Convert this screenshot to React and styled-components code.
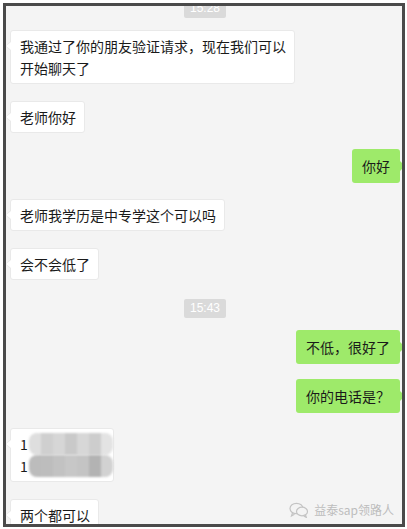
import React from 'react';
import styled, { createGlobalStyle } from 'styled-components';

const GlobalStyle = createGlobalStyle`
body{
    margin:0;
    background:#fff;
    font-family:"Noto Sans CJK SC","Liberation Sans",sans-serif;
}
`;

const Frame = styled.div`
position:relative;
box-sizing:border-box;
width:402px;
height:524px;
margin:3px 0 0 3px;
border:3px solid #4a4a4a;
background:#f4f4f4;
overflow:hidden;
display:flex;
flex-direction:column;
padding:0 2px 0 4px;
`;

const Time = styled.div`
align-self:center;
height:19px;
line-height:19px;
padding:0 6px;
margin-top:${p => p.$top}px;
background:#dadada;
border-radius:2px;
color:#fff;
font-family:"Liberation Sans",Arial,sans-serif;
font-size:12px;
`;

const Row = styled.div`
display:flex;
justify-content:${p => (p.$mine ? 'flex-end' : 'flex-start')};
margin-top:${p => p.$top}px;
flex-shrink:0;
`;

const Bubble = styled.div`
position:relative;
max-width:266px;
padding:${p => (p.$mine ? '6px 10px' : '4px 8px 4px 9px')};
border:${p => (p.$mine ? 'none' : '1px solid #e9e9e9')};
border-radius:3px;
background:${p => (p.$mine ? '#9eea6a' : '#fff')};
color:#1a1a1a;
font-size:14px;
line-height:22px;
&::before{
    content:'';
    position:absolute;
    top:${p => (p.$mine ? '12px' : '10px')};
    ${p => (p.$mine ? 'right:-5px;' : 'left:-6px;')}
    border-top:5px solid transparent;
    border-bottom:5px solid transparent;
    ${p => (p.$mine ? 'border-left:5px solid #9eea6a;' : 'border-right:6px solid #e9e9e9;')}
}
&::after{
    content:'';
    position:absolute;
    top:11px;
    left:-5px;
    display:${p => (p.$mine ? 'none' : 'block')};
    border-top:4px solid transparent;
    border-bottom:4px solid transparent;
    border-right:5px solid #fff;
}
`;

const Line = styled.div`
display:flex;
align-items:center;
height:22px;
`;

const Mosaic = styled.div`
display:flex;
margin:0 -8px 0 1px;
filter:blur(1px);
border-radius:8px;
overflow:hidden;
`;

const Cell = styled.span`
width:12px;
height:22px;
background:${p => p.$c};
`;

const Watermark = styled.div`
position:absolute;
right:8px;
bottom:6px;
display:flex;
align-items:center;
gap:5px;
color:#bdbdbd;
font-size:12px;
`;

const topCells = ['#dedede', '#cfcfcf', '#d6d6d6', '#c9c9c9', '#d7d7d7', '#cdcdcd', '#e3e3e3'];
const bottomCells = ['#bcbcbc', '#bdbdbd', '#c2c2c2', '#c7c7c7', '#c4c4c4', '#b3b3b3', '#d2d2d2'];

const messages = [
    { time: '15:28', top: -7 },
    { text: '我通过了你的朋友验证请求，现在我们可以开始聊天了', top: 12 },
    { text: '老师你好', top: 17 },
    { text: '你好', mine: true, top: 16 },
    { text: '老师我学历是中专学这个可以吗', top: 16 },
    { text: '会不会低了', top: 17 },
    { time: '15:43', top: 19 },
    { text: '不低，很好了', mine: true, top: 12 },
    { text: '你的电话是？', mine: true, top: 15 },
    { phone: true, top: 15 },
    { text: '两个都可以', top: 17 },
];

export default function App() {
    return (
        <>
            <GlobalStyle />
            <Frame>
                {messages.map((m, i) => {
                    if (m.time) return <Time key={i} $top={m.top}>{m.time}</Time>;
                    if (m.phone) return (
                        <Row key={i} $top={m.top}>
                            <Bubble>
                                <Line>1<Mosaic>{topCells.map((c, j) => <Cell key={j} $c={c} />)}</Mosaic></Line>
                                <Line>1<Mosaic>{bottomCells.map((c, j) => <Cell key={j} $c={c} />)}</Mosaic></Line>
                            </Bubble>
                        </Row>
                    );
                    return (
                        <Row key={i} $mine={m.mine} $top={m.top}>
                            <Bubble $mine={m.mine}>{m.text}</Bubble>
                        </Row>
                    );
                })}
                <Watermark>
                    <svg width="20" height="16" viewBox="0 0 20 16" fill="none" stroke="#c4c4c4" strokeWidth="1.2">
                        <ellipse cx="7.5" cy="6.5" rx="6.5" ry="5.2" />
                        <path d="M3.5 11l-1 3 3-1.8" />
                        <ellipse cx="13" cy="9.5" rx="5.5" ry="4.3" fill="#f4f4f4" />
                        <path d="M16.5 13l0.8 2.4-2.6-1.4" />
                    </svg>
                    益泰sap领路人
                </Watermark>
            </Frame>
        </>
    );
}
